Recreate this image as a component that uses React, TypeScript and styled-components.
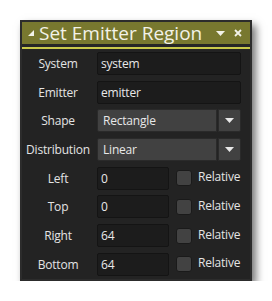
import React from 'react';
import styled, { createGlobalStyle } from 'styled-components';

const GlobalStyle = createGlobalStyle`
  body {
    margin: 0;
    background: #ffffff;
    font-family: "Open Sans", "Noto Sans", sans-serif;
  }
`;

const Page = styled.div`
  padding: 20px 0 0 20px;
`;

const Window = styled.div`
  width: 232px;
  box-sizing: border-box;
  border: 2px solid #2c2c2c;
  background: #232323;
  box-shadow: 4px 5px 8px rgba(0, 0, 0, 0.55);
`;

const TitleBar = styled.div`
  height: 22px;
  background: #78782f;
  display: flex;
  align-items: center;
  padding: 0 8px 0 6px;
  color: #f2f2e8;
`;

const TitleDivider = styled.div`
  height: 3px;
  background: #262626;
  border-bottom: 2px solid #c9c94b;
`;

const Title = styled.span`
  flex: 1;
  font-size: 19px;
  line-height: 22px;
  margin-left: 5px;
  white-space: nowrap;
`;

const TitleIcon = styled.svg`
  display: block;
  flex: none;
`;

const Body = styled.div`
  padding: 3px 9px 3px 0;
  display: flex;
  flex-direction: column;
  gap: 5.7px;
`;

const Row = styled.div`
  display: flex;
  align-items: center;
  height: 23px;
`;

const Label = styled.div`
  flex: none;
  width: 72px;
  margin-right: 3px;
  text-align: center;
  font-size: 12px;
  letter-spacing: -0.2px;
  color: #e4e4e4;
  white-space: nowrap;
`;

const TextField = styled.div<{ $w?: number }>`
  box-sizing: border-box;
  width: ${({ $w }) => ($w ? `${$w}px` : 'auto')};
  flex: ${({ $w }) => ($w ? 'none' : '1')};
  height: 23px;
  background: #1c1c1c;
  border: 1px solid #141414;
  border-radius: 2px;
  padding: 0 3px;
  font-size: 12px;
  letter-spacing: -0.2px;
  line-height: 21px;
  color: #e8e8e8;
`;

const Select = styled.div`
  flex: 1;
  display: flex;
  height: 23px;
  gap: 1px;
`;

const SelectValue = styled.div`
  flex: 1;
  box-sizing: border-box;
  background: #414141;
  border: 1px solid #2a2a2a;
  border-radius: 2px 0 0 2px;
  padding: 0 5px;
  font-size: 12px;
  letter-spacing: -0.2px;
  line-height: 21px;
  color: #e8e8e8;
`;

const SelectButton = styled.div`
  width: 23px;
  box-sizing: border-box;
  background: #414141;
  border: 1px solid #2a2a2a;
  border-radius: 0 2px 2px 0;
  display: flex;
  align-items: center;
  justify-content: center;
`;

const Check = styled.div`
  width: 16px;
  height: 16px;
  box-sizing: border-box;
  margin-left: 7px;
  background: #424242;
  border: 1px solid #1a1a1a;
  border-radius: 3px;
`;

const CheckLabel = styled.span`
  margin-left: 6px;
  font-size: 12px;
  letter-spacing: -0.2px;
  color: #e4e4e4;
  margin-top: -3px;
`;

const Caret = () => (
  <svg width="9" height="5" viewBox="0 0 9 5">
    <path d="M0 0H9L4.5 5Z" fill="#e8e8e8" />
  </svg>
);

const textRows = [
  { label: 'System', value: 'system' },
  { label: 'Emitter', value: 'emitter' },
];

const selectRows = [
  { label: 'Shape', value: 'Rectangle' },
  { label: 'Distribution', value: 'Linear' },
];

const coordRows = [
  { label: 'Left', value: '0' },
  { label: 'Top', value: '0' },
  { label: 'Right', value: '64' },
  { label: 'Bottom', value: '64' },
];

export default function App() {
  return (
    <Page>
      <GlobalStyle />
      <Window>
        <TitleBar>
          <TitleIcon width="6" height="6" viewBox="0 0 6 6">
            <path d="M6 0V6H0Z" fill="#f2f2e8" />
          </TitleIcon>
          <Title>Set Emitter Region</Title>
          <TitleIcon width="9" height="5" viewBox="0 0 9 5">
            <path d="M0 0H9L4.5 5Z" fill="#f2f2e8" />
          </TitleIcon>
          <TitleIcon width="8" height="8" viewBox="0 0 8 8" style={{ marginLeft: 9 }}>
            <path d="M1 1L7 7M7 1L1 7" stroke="#f2f2e8" strokeWidth="1.8" />
          </TitleIcon>
        </TitleBar>
        <TitleDivider />
        <Body>
          {textRows.map(r => (
            <Row key={r.label}>
              <Label>{r.label}</Label>
              <TextField>{r.value}</TextField>
            </Row>
          ))}
          {selectRows.map(r => (
            <Row key={r.label}>
              <Label>{r.label}</Label>
              <Select>
                <SelectValue>{r.value}</SelectValue>
                <SelectButton>
                  <Caret />
                </SelectButton>
              </Select>
            </Row>
          ))}
          {coordRows.map(r => (
            <Row key={r.label}>
              <Label>{r.label}</Label>
              <TextField $w={72}>{r.value}</TextField>
              <Check />
              <CheckLabel>Relative</CheckLabel>
            </Row>
          ))}
        </Body>
      </Window>
    </Page>
  );
}
